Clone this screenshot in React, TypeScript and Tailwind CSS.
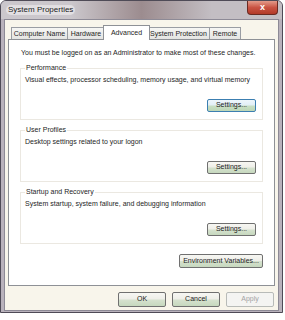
import React from "react";

type BtnProps = {
  label: string;
  className?: string;
  focused?: boolean;
  disabled?: boolean;
};

function WinButton({ label, className = "", focused = false, disabled = false }: BtnProps) {
  const border = disabled
    ? "border-[#b8bbb8]"
    : focused
    ? "border-[#3c7fb1]"
    : "border-[#707070]";
  const face = disabled
    ? "bg-[#f4f4f2]"
    : focused
    ? "bg-[linear-gradient(#eef6fb_0%,#e2eef6_48%,#c9dfc4_52%,#bcd6b6_100%)]"
    : "bg-[linear-gradient(#f7f7f3_0%,#eeeee8_48%,#d6e2cf_52%,#c6d8be_100%)]";
  const text = disabled ? "text-[#a3a3a3]" : "text-[#1a1a1a]";
  return (
    <div
      className={`flex shrink-0 items-center justify-center rounded-[2px] border ${border} ${face} ${text} ${className}`}
    >
      {label}
    </div>
  );
}

function Group({ title, desc, focused = false }: { title: string; desc: string; focused?: boolean }) {
  return (
    <div className="flex h-[52px] flex-col border border-[#ebe8e1] pl-[4px] pr-[6px]">
      <span className="-mt-[6px] h-[10px] w-fit bg-white px-[1px] leading-[10px]">{title}</span>
      <span className="mt-[2px] leading-[9px]">{desc}</span>
      <WinButton label="Settings..." focused={focused} className="mt-[15px] h-[13px] w-[49px] self-end" />
    </div>
  );
}

const tabs = [
  { name: "Computer Name", w: "w-[57px]" },
  { name: "Hardware", w: "w-[38px]" },
  { name: "Advanced", w: "w-[43px]", active: true },
  { name: "System Protection", w: "w-[63px]" },
  { name: "Remote", w: "w-[32px]" },
];

export default function App() {
  return (
    <div className="h-[320px] w-[285px] bg-white font-['Liberation_Sans',Arial,sans-serif] text-[7px] text-[#1e1e1e]">
      {/* window frame */}
      <div className="flex h-[313px] w-[283px] flex-col rounded-t-[6px] border border-[#4f4b57] bg-[#b9b2bc] px-[3px] pb-[1px]">
        {/* title bar, glass shows the desktop behind */}
        <div className="-mx-[3px] flex h-[18px] items-start justify-between rounded-t-[5px] bg-linear-to-r from-[#cbc7cc] from-25% via-[#9c8c8f] via-50% to-[#c3bec3] to-75% px-[3px]">
          <span className="ml-[2px] mt-[4px] rounded-full bg-[#ffffff66] px-[2px] text-[8px] leading-[10px] text-[#1b1b1b] [text-shadow:0_0_4px_white]">
            System Properties
          </span>
          <div className="mr-[1px] flex h-[14px] w-[31px] items-center justify-center rounded-b-[4px] border border-t-0 border-[#6a2a22] bg-linear-to-b from-[#e39a8a] via-[#c95343] to-[#b23a28] text-[9px] font-bold leading-none text-white">
            x
          </div>
        </div>

        {/* client area */}
        <div className="flex flex-1 flex-col border border-[#8d8a96] bg-[#f8f5eb] px-[3px]">
          {/* tabs */}
          <div className="mt-[4px] flex h-[15px] items-end pl-[4px]">
            {tabs.map((t) =>
              t.active ? (
                <div
                  key={t.name}
                  className="relative z-10 -mx-[2px] -mb-px flex h-[15px] w-[47px] items-start justify-center border border-b-0 border-[#8e9196] bg-white pt-[2px] leading-[9px]"
                >
                  {t.name}
                </div>
              ) : (
                <div
                  key={t.name}
                  className={`-ml-px flex h-[12px] ${t.w} items-center justify-center border border-b-0 border-[#9a9da3] bg-[linear-gradient(#f6f6f4,#e4e4e2)] leading-[9px]`}
                >
                  {t.name}
                </div>
              )
            )}
          </div>

          {/* tab panel */}
          <div className="flex h-[247px] flex-col border border-[#8e9196] bg-white px-[11px] pt-[8px]">
            <span className="ml-[1px] leading-[9px]">
              You must be logged on as an Administrator to make most of these changes.
            </span>
            <div className="mt-[11px] flex flex-col gap-[10px]">
              <Group
                title="Performance"
                desc="Visual effects, processor scheduling, memory usage, and virtual memory"
                focused
              />
              <Group title="User Profiles" desc="Desktop settings related to your logon" />
              <Group
                title="Startup and Recovery"
                desc="System startup, system failure, and debugging information"
              />
            </div>
            <WinButton label="Environment Variables..." className="mt-[10px] h-[14px] w-[84px] self-end" />
          </div>

          {/* dialog buttons */}
          <div className="mt-[6px] flex justify-end gap-[6px] pr-[1px]">
            <WinButton label="OK" className="h-[15px] w-[48px]" />
            <WinButton label="Cancel" className="h-[15px] w-[48px]" />
            <WinButton label="Apply" disabled className="h-[15px] w-[48px]" />
          </div>
        </div>
      </div>
    </div>
  );
}
